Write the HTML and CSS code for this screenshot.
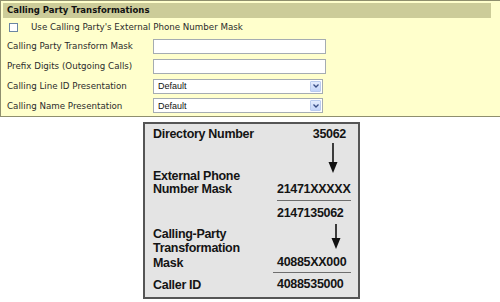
FILE: index.html
```html
<!doctype html>
<html lang="en">

<head>
  <meta charset="UTF-8" />
  <meta name="viewport" content="width=device-width, initial-scale=1.0" />
  <title>Calling Party Transformations</title>
  <link rel="stylesheet" href="styles.css">
</head>

<body>
  <!-- Settings panel -->
  <div class="panel">
    <div class="panel-head">Calling Party Transformations</div>
    <div class="check-row">
      <span class="checkbox"></span>
      <span>Use Calling Party's External Phone Number Mask</span>
    </div>
    <div class="field-row">
      <span class="field-label">Calling Party Transform Mask</span>
      <span class="text-box"></span>
    </div>
    <div class="field-row">
      <span class="field-label">Prefix Digits (Outgoing Calls)</span>
      <span class="text-box"></span>
    </div>
    <div class="field-row">
      <span class="field-label">Calling Line ID Presentation</span>
      <span class="select-box">
        <span>Default</span>
        <span class="select-btn">
          <svg width="6" height="4" viewBox="0 0 6 4"><path d="M0.5 0.5 L3 3 L5.5 0.5" fill="none" stroke="#3b4f86" stroke-width="1.3" /></svg>
        </span>
      </span>
    </div>
    <div class="field-row last">
      <span class="field-label">Calling Name Presentation</span>
      <span class="select-box">
        <span>Default</span>
        <span class="select-btn">
          <svg width="6" height="4" viewBox="0 0 6 4"><path d="M0.5 0.5 L3 3 L5.5 0.5" fill="none" stroke="#3b4f86" stroke-width="1.3" /></svg>
        </span>
      </span>
    </div>
  </div>

  <!-- Transformation diagram -->
  <div class="diagram">
    <div class="labels">
      <div class="lbl">Directory Number</div>
      <div class="lbl ext">External Phone<br>Number Mask</div>
      <div class="lbl cpt">Calling-Party<br>Transformation<br>Mask</div>
      <div class="lbl caller">Caller ID</div>
    </div>
    <div class="values">
      <div class="val dn">35062</div>
      <svg class="arrow arrow-1" width="10" height="30" viewBox="0 0 10 30">
        <line x1="5" y1="0" x2="5" y2="21" stroke="#111" stroke-width="1.6" />
        <path d="M0.5 19 L9.5 19 L5 30 Z" fill="#111" />
      </svg>
      <div class="val mask">21471XXXXX</div>
      <div class="rule"></div>
      <div class="val full">2147135062</div>
      <svg class="arrow arrow-2" width="10" height="25" viewBox="0 0 10 25">
        <line x1="5" y1="0" x2="5" y2="16" stroke="#111" stroke-width="1.6" />
        <path d="M0.5 14 L9.5 14 L5 25 Z" fill="#111" />
      </svg>
      <div class="val tmask">40885XX000</div>
      <div class="rule rule-2"></div>
      <div class="val cid">4088535000</div>
    </div>
  </div>
</body>

</html>
```

FILE: styles.css
```css
body,
html {
  background-color: #ffffff;
  margin: 0;
  padding: 0;
}

/* Settings panel */
.panel {
  width: 497px;
  height: 113px;
  border: 1px solid #8f8f6e;
  background-color: #ffffcc;
  padding: 2px 0 0 2px;
  font-family: "DejaVu Sans", Verdana, sans-serif;
  font-size: 8.7px;
  color: #2b2b2b;
}

.panel-head {
  width: 484px;
  height: 15px;
  line-height: 15px;
  padding-left: 4px;
  background-color: #cccc99;
  font-weight: bold;
  font-size: 8.5px;
  color: #111;
}

.check-row {
  height: 18px;
  display: flex;
  align-items: center;
  gap: 13px;
  padding-left: 6px;
}

.checkbox {
  width: 7px;
  height: 7px;
  border: 1px solid #6b86a3;
  background-color: #ffffff;
}

.field-row {
  height: 20px;
  display: grid;
  grid-template-columns: 150px auto;
  align-items: center;
}

.field-row.last {
  height: 19px;
}

.field-label {
  padding-left: 4px;
}

.text-box {
  width: 171px;
  height: 13px;
  border: 1px solid #a5acb2;
  background-color: #ffffff;
}

.select-box {
  width: 164px;
  height: 13px;
  border: 1px solid #a5acb2;
  background-color: #ffffff;
  display: flex;
  align-items: center;
  justify-content: space-between;
  padding-left: 4px;
  font-family: "Liberation Sans", Arial, sans-serif;
  font-size: 9px;
  color: #111;
}

.select-btn {
  width: 9px;
  height: 9px;
  margin-right: 1px;
  border: 1px solid #b9cbef;
  border-radius: 1px;
  background: linear-gradient(#e3ebfd, #c4d5fa);
  display: flex;
  align-items: center;
  justify-content: center;
}

/* Diagram */
.diagram {
  width: 217px;
  margin: 5px 0 0 143px;
  padding: 3px 7px 5px 8px;
  box-sizing: border-box;
  border: 2px solid #555555;
  background-color: #e4e4e4;
  display: flex;
  font-family: "Liberation Sans", Arial, sans-serif;
  font-weight: bold;
  font-size: 12.5px;
  letter-spacing: -0.3px;
  color: #141414;
}

.labels {
  width: 124px;
}

.values {
  width: 74px;
}

.lbl,
.val {
  line-height: 14px;
}

.lbl.ext {
  line-height: 13px;
  margin-top: 29px;
}

.lbl.cpt {
  line-height: 14.3px;
  margin-top: 31px;
}

.lbl.caller {
  margin-top: 8px;
}

.val.dn {
  text-align: right;
  padding-right: 5px;
}

.arrow {
  display: block;
}

.arrow-1 {
  margin: 2px 0 0 51px;
}

.val.mask {
  margin-top: 9px;
}

.rule {
  height: 1px;
  margin-top: 4px;
  background-color: #6e6e6e;
}

.val.full {
  margin-top: 5px;
}

.arrow-2 {
  margin: 4px 0 0 54px;
}

.val.tmask {
  margin-top: 6px;
}

.rule-2 {
  margin: 3px 0 0 -4px;
}

.val.cid {
  margin-top: 4px;
}
```
